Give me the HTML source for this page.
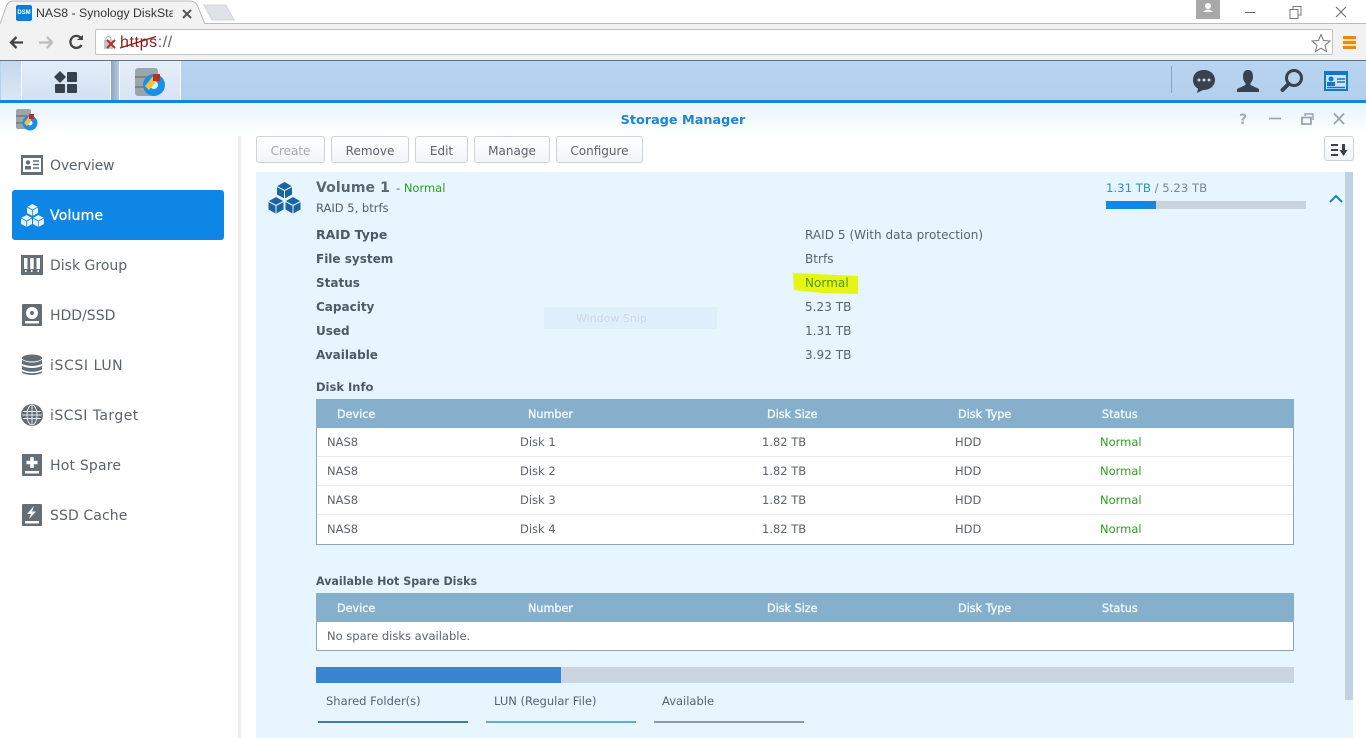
<!DOCTYPE html>
<html><head><meta charset="utf-8"><style>
html,body{margin:0;padding:0;width:1366px;height:738px;overflow:hidden;background:#fff}
body{position:relative;font-family:"DejaVu Sans","Liberation Sans",sans-serif;color:#555e68}
.a,.t{position:absolute}
.t{white-space:nowrap;font-size:11.5px;line-height:14px}
svg{position:absolute;overflow:visible}
.nav{font-size:14px;line-height:18px;color:#5b636b;left:50px}
.btn{position:absolute;top:136px;height:27px;box-sizing:border-box;border:1px solid #c9d3da;border-radius:3px;background:linear-gradient(#fff,#f1f5f8);font-size:12px;line-height:28px;text-align:center;color:#5b636b}
.lb{left:316px;font-weight:bold;font-size:12px;color:#4d5a66}
.v{left:805px;font-size:12px;color:#5b636b;letter-spacing:.05px}
.th{color:#f2f8fc;font-size:11.2px;-webkit-text-stroke:.35px #f2f8fc}
.g{color:#2e9e1f}
.c{font-size:11.5px;color:#5b636b}
</style></head><body>
<!-- browser chrome -->
<div class="a" style="left:0;top:0;width:1366px;height:24px;background:#fff"></div>
<div class="a" style="left:0;top:24px;width:1366px;height:36px;background:#f2f2f2"></div>
<div class="a" style="left:0;top:23px;width:1366px;height:1px;background:#bcbcbc"></div>
<svg style="left:0;top:0" width="240" height="26"><path d="M0 24 L6 7 Q8 1 13 1 H190 Q196 1 198 7 L205 24" fill="#f2f2f2" stroke="#b8b8b8"/><path d="M204 5 H226 L234 20 H212 Z" fill="#dfe3e7" stroke="#d0d4d8"/></svg>
<div class="a" style="left:16px;top:5px;width:16px;height:16px;background:#0f7fd6;border-radius:2px;color:#fff;font:bold 6px/16px 'Liberation Sans',sans-serif;text-align:center">DSM</div>
<div class="t" style="left:36px;top:6px;font:12.3px/15px 'Liberation Sans',sans-serif;color:#333;width:137px;overflow:hidden">NAS8 - Synology DiskStat</div>
<svg style="left:181px;top:8px" width="12" height="12"><path d="M2 2 L10 10 M10 2 L2 10" stroke="#555" stroke-width="2"/></svg>
<!-- window controls -->
<div class="a" style="left:1196px;top:0;width:24px;height:19px;background:#a8a8a8"></div>
<svg style="left:1196px;top:0" width="24" height="19"><circle cx="12" cy="6" r="3" fill="#fff"/><path d="M7 12 Q12 7 17 12 Z" fill="#fff"/></svg>
<svg style="left:1240px;top:4px" width="120" height="16"><path d="M5 8.500 H15" stroke="#666"/><path d="M50 5.500 H58 V14.500 H50 Z M53 5 V2.500 H61 V11 H58" fill="none" stroke="#777"/><path d="M96 3 L106 13 M106 3 L96 13" stroke="#666"/></svg>
<!-- toolbar -->
<svg style="left:9px;top:33px" width="80" height="20"><path d="M2 9.500 H14 M7.500 4 L2 9.500 L7.500 15" fill="none" stroke="#444" stroke-width="2.300"/><path d="M30 9.500 H43 M38 4 L43 9.500 L38 15" fill="none" stroke="#bbb" stroke-width="2.300"/><path d="M71.500 4.500 A6 6 0 1 0 72.500 12" fill="none" stroke="#444" stroke-width="2.300"/><path d="M68 7 H74 V2 Z" fill="#444"/></svg>
<div class="a" style="left:95px;top:29px;width:1238px;height:26px;box-sizing:border-box;background:#fff;border:1px solid #c4c4c4;border-radius:2px"></div>
<svg style="left:102px;top:34px" width="60" height="18"><rect x="2" y="6" width="9" height="9" fill="#c4c4c4"/><path d="M4 6 V4 Q6 1 9 4 V6" fill="none" stroke="#aaa"/><path d="M5 6 L13 14 M13 6 L5 14" stroke="#b0342c" stroke-width="2"/></svg>
<div class="t" style="left:120px;top:34px;font:16px/18px 'Liberation Sans',sans-serif;color:#666;letter-spacing:.6px"><span style="color:#8e1c1c">https</span>://</div>
<svg style="left:102px;top:34px" width="60" height="18"><path d="M18 14 L54 2.500" stroke="#8e1c1c" stroke-width="1.300"/></svg>
<svg style="left:1311px;top:33px" width="20" height="20"><path d="M10 1.500 L12.500 7.500 L19 8 L14 12.300 L15.600 18.600 L10 15.200 L4.400 18.600 L6 12.300 L1 8 L7.500 7.500 Z" fill="#fff" stroke="#777"/></svg>
<div class="a" style="left:1343px;top:36px;width:13px;height:13px;background:repeating-linear-gradient(#e88a1a 0 3px,#f5e6a0 3px 5px)"></div>
<!-- DSM taskbar -->
<div class="a" style="left:0;top:60px;width:1366px;height:1px;background:#5c7187"></div>
<div class="a" style="left:0;top:61px;width:1366px;height:39px;background:linear-gradient(#b8d4f0,#b2cfec)"></div>
<div class="a" style="left:0;top:100px;width:1366px;height:3px;background:#1186dc"></div>
<div class="a" style="left:1px;top:61px;width:20px;height:39px;background:linear-gradient(#c4d8ee,#dbe7f4);border-right:1px solid #f4f8fc"></div>
<div class="a" style="left:22px;top:61px;width:88px;height:39px;background:linear-gradient(#e4eefa,#d2e0f0);border-right:1px solid #f4f8fc"></div>
<div class="a" style="left:111px;top:61px;width:8px;height:39px;background:linear-gradient(90deg,#8ea4bd,#b6cbe3)"></div>
<div class="a" style="left:119px;top:61px;width:60px;height:39px;background:linear-gradient(#e6eef8,#d8e4f2);border:solid #f7fafd;border-width:0 1px"></div>
<svg style="left:54px;top:71px" width="24" height="22"><path d="M6 0 L12 6 L6 12 L0 6 Z" fill="#37424e"/><rect x="13" y="1" width="10" height="10" rx="1" fill="#37424e"/><rect x="1" y="13" width="10" height="9" rx="1" fill="#37424e"/><rect x="13" y="13" width="10" height="9" rx="1" fill="#37424e"/></svg>
<svg style="left:135px;top:67px" width="32" height="30"><rect x="0" y="1" width="23" height="28" rx="3" fill="#9aa6ae"/><path d="M0 10 H23 M0 20 H23" stroke="#6b5f50"/><circle cx="19" cy="18" r="11" fill="#1a8fe8"/><circle cx="19" cy="18" r="4" fill="#e8eef4"/><path d="M10 19 L19 8 L20 16 L14 23 Z" fill="#f0c33a"/><rect x="18" y="7" width="7" height="7" fill="#b82f24"/></svg>
<div class="a" style="left:1171px;top:66px;width:1px;height:27px;background:#8ca2b8"></div>
<svg style="left:1192px;top:69px" width="24" height="24"><path d="M12 1 C5 1 1 5 1 11 C1 15 3 18 6 19.500 L5 24 L11 21 C19 21 23 16 23 11 C23 5 18 1 12 1Z" fill="#37424e"/><circle cx="7" cy="11" r="1.500" fill="#c8d8e8"/><circle cx="12" cy="11" r="1.500" fill="#c8d8e8"/><circle cx="17" cy="11" r="1.500" fill="#c8d8e8"/></svg>
<svg style="left:1236px;top:69px" width="24" height="24"><path d="M12 1 C8 1 7 4 7 8 C7 11 8.500 13 9.500 14 V16 L1 20 V23 H23 V20 L14.500 16 V14 C15.500 13 17 11 17 8 C17 4 16 1 12 1Z" fill="#37424e"/></svg>
<svg style="left:1280px;top:69px" width="24" height="24"><circle cx="14" cy="9" r="7.500" fill="none" stroke="#37424e" stroke-width="3"/><path d="M8.500 15 L2.500 21" stroke="#37424e" stroke-width="4" stroke-linecap="round"/></svg>
<svg style="left:1324px;top:71px" width="24" height="20"><rect x="1" y="1" width="22" height="18" fill="#cfe2f5" stroke="#0f78c8" stroke-width="2"/><rect x="0" y="0" width="24" height="4" fill="#0f78c8"/><circle cx="7" cy="8" r="2.500" fill="#0f78c8"/><rect x="3" y="11" width="8" height="4" fill="#0f78c8"/><path d="M13 8 H21 M13 11 H21 M3 16.500 H21" stroke="#0f78c8" stroke-width="1.500"/></svg>
<!-- app titlebar -->
<div class="a" style="left:0;top:103px;width:1366px;height:33px;background:linear-gradient(#e8f4fc,#fff)"></div>
<svg style="left:16px;top:109px" width="23" height="23"><rect x="0" y="0" width="15" height="20" rx="2" fill="#9aa6ae"/><path d="M0 7 H15 M0 14 H15" stroke="#6b5f50"/><circle cx="14" cy="14" r="7.500" fill="#1a8fe8"/><circle cx="14" cy="14" r="2.500" fill="#eef"/><path d="M8 14 L14 6 L15 12 L11 17 Z" fill="#f0c33a"/><rect x="13" y="5" width="5" height="5" fill="#b82f24"/></svg>
<div class="t" style="left:0;width:1366px;top:112px;text-align:center;font-size:12.800px;line-height:17px;font-weight:bold;color:#1c86d0">Storage Manager</div>
<div class="t" style="left:1239px;top:112px;font-size:14px;line-height:16px;font-weight:bold;color:#a4adb6">?</div>
<svg style="left:1268px;top:112px" width="80" height="14"><path d="M1 6.500 H13" stroke="#9aa3ac" stroke-width="1.600"/><path d="M34 5.500 H43 V12 H34 Z" fill="none" stroke="#9aa3ac" stroke-width="1.800"/><path d="M37 4 V2 H45 V8" fill="none" stroke="#9aa3ac" stroke-width="1.400"/><path d="M66 1.500 L76 12 M76 1.500 L66 12" stroke="#9aa3ac" stroke-width="1.800"/></svg>
<!-- sidebar -->
<div class="a" style="left:238px;top:136px;width:3px;height:602px;background:#eceef0"></div>
<div class="a" style="left:12px;top:190px;width:212px;height:50px;background:#0d86e6;border-radius:3px"></div>
<svg style="left:21px;top:155px" width="22" height="20"><rect width="22" height="20" fill="#656d75"/><rect x="2" y="3" width="18" height="14" fill="#fff"/><circle cx="7" cy="7.500" r="2.200" fill="#656d75"/><rect x="4" y="11" width="6" height="3.500" fill="#656d75"/><path d="M12 6 H18 M12 9.500 H18 M12 13 H18" stroke="#656d75" stroke-width="1.500"/></svg>
<svg style="left:21px;top:204px" width="23" height="23"><path d="M11.500 0 L17 3 V9 L11.500 12 L6 9 V3 Z M5.700 11 L11 14 V20 L5.700 23 L0 20 V14 Z M17.300 11 L23 14 V20 L17.300 23 L12 20 V14 Z" fill="#e6f3fd"/><path d="M6 3 L11.500 6 L17 3 M11.500 6 V12 M0 14 L5.700 17 L11 14 M5.700 17 V23 M12 14 L17.300 17 L23 14 M17.300 17 V23" fill="none" stroke="#0d86e6" stroke-width=".8"/></svg>
<svg style="left:21px;top:255px" width="22" height="20"><rect width="22" height="20" fill="#656d75"/><rect x="3" y="3" width="3.500" height="11" fill="#fff"/><rect x="9.200" y="3" width="3.500" height="11" fill="#fff"/><rect x="15.500" y="3" width="3.500" height="11" fill="#fff"/><rect x="4" y="15" width="1.500" height="2" fill="#fff"/><rect x="10" y="15" width="1.500" height="2" fill="#fff"/><rect x="16.500" y="15" width="1.500" height="2" fill="#fff"/></svg>
<svg style="left:22px;top:304px" width="20" height="22"><rect width="20" height="22" rx="1" fill="#656d75"/><circle cx="10" cy="9" r="6" fill="#fff"/><circle cx="10" cy="9" r="2" fill="#656d75"/><rect x="3" y="17" width="14" height="2.500" fill="#fff"/></svg>
<svg style="left:22px;top:354px" width="20" height="22"><ellipse cx="10" cy="4" rx="10" ry="3.500" fill="#656d75"/><path d="M0 6 Q10 11 20 6 V10 Q10 14 0 10 Z M0 12 Q10 16 20 12 V15.500 Q10 20 0 15.500 Z M0 17.500 Q10 21 20 17.500 V19 Q10 23 0 19 Z" fill="#656d75"/></svg>
<svg style="left:21px;top:404px" width="22" height="22"><circle cx="11" cy="11" r="11" fill="#656d75"/><path d="M2 7.500 H20 M2 14.500 H20 M1 11 H21 M11 1 V21" stroke="#e8e8e8"/><ellipse cx="11" cy="11" rx="5" ry="10" fill="none" stroke="#e8e8e8"/></svg>
<svg style="left:22px;top:454px" width="20" height="22"><rect width="20" height="22" rx="1" fill="#656d75"/><path d="M10 3 V14 M4.500 8.500 H15.500" stroke="#fff" stroke-width="3.500"/><rect x="3" y="17" width="14" height="2.500" fill="#fff"/></svg>
<svg style="left:22px;top:504px" width="20" height="22"><rect width="20" height="22" rx="1" fill="#656d75"/><path d="M12 2 L5 10 H9 L7 15 L14 7.500 H10 Z" fill="#fff"/><rect x="3" y="17" width="14" height="2.500" fill="#fff"/></svg>
<div class="t nav" style="top:157px;letter-spacing:-.2px">Overview</div>
<div class="t nav" style="top:207px;color:#fff;-webkit-text-stroke:.3px #fff;letter-spacing:.2px">Volume</div>
<div class="t nav" style="top:257px">Disk Group</div>
<div class="t nav" style="top:307px">HDD/SSD</div>
<div class="t nav" style="top:357px;letter-spacing:.6px">iSCSI LUN</div>
<div class="t nav" style="top:407px;letter-spacing:.45px">iSCSI Target</div>
<div class="t nav" style="top:457px;letter-spacing:.2px">Hot Spare</div>
<div class="t nav" style="top:507px;letter-spacing:.1px">SSD Cache</div>
<!-- buttons -->
<div class="btn" style="left:256px;width:69px;color:#a2abb3">Create</div>
<div class="btn" style="left:331px;width:78px">Remove</div>
<div class="btn" style="left:415px;width:53px">Edit</div>
<div class="btn" style="left:474px;width:76px">Manage</div>
<div class="btn" style="left:556px;width:87px">Configure</div>
<div class="btn" style="left:1324px;width:30px;height:25px"></div>
<svg style="left:1331px;top:143px" width="18" height="14"><path d="M0 2 H7 M0 7 H7 M0 12 H7" stroke="#37424e" stroke-width="2"/><path d="M12.500 1 V8" stroke="#37424e" stroke-width="3"/><path d="M8.500 7 H16.500 L12.500 13 Z" fill="#37424e"/></svg>
<!-- volume panel -->
<div class="a" style="left:256px;top:172px;width:1097px;height:566px;background:#e6f5fe"></div>
<div class="a" style="left:1345px;top:172px;width:8px;height:528px;background:#c1d1de"></div>
<svg style="left:268px;top:182px" width="33" height="32"><path d="M16.500 0 L24 4.300 V12.500 L16.500 16.500 L9 12.500 V4.300 Z M8 15 L15.500 19.300 V27.500 L8 31.800 L0.500 27.500 V19.300 Z M25 15 L32.500 19.300 V27.500 L25 31.800 L17.500 27.500 V19.300 Z" fill="#1a659f"/><path d="M9 4.500 L16.500 8.500 L24 4.500 M16.500 8.500 V16.500 M0.500 19.500 L8 23.500 L15.500 19.500 M8 23.500 V31.800 M17.500 19.500 L25 23.500 L32.500 19.500 M25 23.500 V31.800" fill="none" stroke="#e6f5fe" stroke-width="1"/></svg>
<div class="t" style="left:316px;top:179px;font-size:14px;line-height:18px;font-weight:bold;color:#5a6671;letter-spacing:.1px">Volume 1</div>
<div class="t" style="left:396px;top:181px;font-size:11.500px"><span>-</span> <span class="g">Normal</span></div>
<div class="t" style="left:316px;top:201px;font-size:11.500px">RAID 5, btrfs</div>
<div class="t" style="left:1106px;top:181px;font-size:11.700px"><span style="color:#2a90c8">1.31 TB</span> <span style="color:#7a8791">/ 5.23 TB</span></div>
<div class="a" style="left:1106px;top:201px;width:200px;height:8px;background:#c8d3dc"></div>
<div class="a" style="left:1106px;top:201px;width:50px;height:8px;background:linear-gradient(90deg,#0d8ae8 0,#0d8ae8 70%,#2c7fc8)"></div>
<svg style="left:1329px;top:194px" width="14" height="10"><path d="M1 8 L7 2 L13 8" fill="none" stroke="#1585c8" stroke-width="2"/></svg>
<div class="t lb" style="top:228px;font-size:12.500px">RAID Type</div><div class="t v" style="top:228px">RAID 5 (With data protection)</div>
<div class="t lb" style="top:252px">File system</div><div class="t v" style="top:252px">Btrfs</div>
<div class="t lb" style="top:276px">Status</div>
<svg style="left:792px;top:271px" width="68" height="24"><path d="M1 2 L66 5 L66 23 L30 22 L2 19 Z" fill="#e6f514"/></svg>
<div class="t v" style="top:276px;color:#4f9b0a">Normal</div>
<div class="t lb" style="top:300px">Capacity</div><div class="t v" style="top:300px">5.23 TB</div>
<div class="t lb" style="top:324px">Used</div><div class="t v" style="top:324px">1.31 TB</div>
<div class="t lb" style="top:348px">Available</div><div class="t v" style="top:348px">3.92 TB</div>
<div class="a" style="left:544px;top:307px;width:173px;height:22px;background:#dfeffb"></div>
<div class="t" style="left:576px;top:312px;font-size:11px;color:#cdd8e2">Window Snip</div>
<!-- disk info -->
<div class="t" style="left:316px;top:380px;font-weight:bold;font-size:11.500px;color:#4d5a66">Disk Info</div>
<div class="a" style="left:316px;top:399px;width:978px;height:146px;box-sizing:border-box;border:1px solid #8ca6bb;background:#fff"></div>
<div class="a" style="left:316px;top:399px;width:978px;height:29px;background:#86afcb"></div>
<div class="a" style="left:317px;top:456px;width:976px;height:1px;background:#e8ecef"></div>
<div class="a" style="left:317px;top:485px;width:976px;height:1px;background:#e8ecef"></div>
<div class="a" style="left:317px;top:514px;width:976px;height:1px;background:#e8ecef"></div>
<div class="t th" style="left:337px;top:408px">Device</div><div class="t th" style="left:528px;top:408px">Number</div><div class="t th" style="left:767px;top:408px">Disk Size</div><div class="t th" style="left:958px;top:408px">Disk Type</div><div class="t th" style="left:1102px;top:408px">Status</div>
<div class="t c" style="left:327px;top:435px">NAS8</div><div class="t c" style="left:520px;top:435px">Disk 1</div><div class="t c" style="left:762px;top:435px">1.82 TB</div><div class="t c" style="left:955px;top:435px">HDD</div><div class="t c" style="left:1100px;top:435px;color:#2e9e1f">Normal</div>
<div class="t c" style="left:327px;top:464px">NAS8</div><div class="t c" style="left:520px;top:464px">Disk 2</div><div class="t c" style="left:762px;top:464px">1.82 TB</div><div class="t c" style="left:955px;top:464px">HDD</div><div class="t c" style="left:1100px;top:464px;color:#2e9e1f">Normal</div>
<div class="t c" style="left:327px;top:493px">NAS8</div><div class="t c" style="left:520px;top:493px">Disk 3</div><div class="t c" style="left:762px;top:493px">1.82 TB</div><div class="t c" style="left:955px;top:493px">HDD</div><div class="t c" style="left:1100px;top:493px;color:#2e9e1f">Normal</div>
<div class="t c" style="left:327px;top:522px">NAS8</div><div class="t c" style="left:520px;top:522px">Disk 4</div><div class="t c" style="left:762px;top:522px">1.82 TB</div><div class="t c" style="left:955px;top:522px">HDD</div><div class="t c" style="left:1100px;top:522px;color:#2e9e1f">Normal</div>
<!-- hot spare -->
<div class="t" style="left:316px;top:575px;font-weight:bold;font-size:11.100px;color:#4d5a66">Available Hot Spare Disks</div>
<div class="a" style="left:316px;top:593px;width:978px;height:58px;box-sizing:border-box;border:1px solid #8ca6bb;background:#fff"></div>
<div class="a" style="left:316px;top:593px;width:978px;height:29px;background:#86afcb"></div>
<div class="t th" style="left:337px;top:602px">Device</div><div class="t th" style="left:528px;top:602px">Number</div><div class="t th" style="left:767px;top:602px">Disk Size</div><div class="t th" style="left:958px;top:602px">Disk Type</div><div class="t th" style="left:1102px;top:602px">Status</div>
<div class="t c" style="left:327px;top:629px">No spare disks available.</div>
<!-- usage bar -->
<div class="a" style="left:316px;top:667px;width:978px;height:16px;background:#cbd5e0"></div>
<div class="a" style="left:316px;top:667px;width:245px;height:16px;background:#3a84d0"></div>
<div class="t c" style="left:326px;top:694px">Shared Folder(s)</div>
<div class="t c" style="left:494px;top:694px">LUN (Regular File)</div>
<div class="t c" style="left:662px;top:694px">Available</div>
<div class="a" style="left:318px;top:721px;width:150px;height:2px;background:#3f7f9c"></div>
<div class="a" style="left:486px;top:721px;width:150px;height:2px;background:#5cb0c8"></div>
<div class="a" style="left:654px;top:721px;width:150px;height:2px;background:#8e9ba6"></div>
</body></html>
